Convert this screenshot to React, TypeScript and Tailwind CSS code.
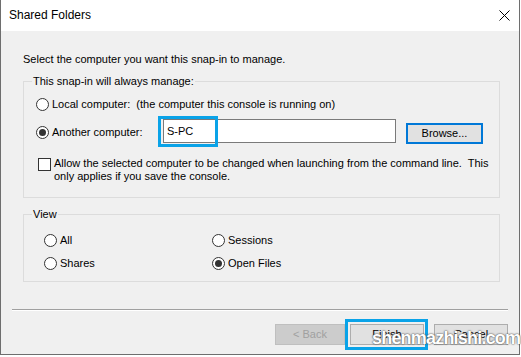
import React from 'react';

function Radio({ checked = false }: { checked?: boolean }) {
  return (
    <span className="flex h-[13px] w-[13px] shrink-0 items-center justify-center rounded-full border border-[#333] bg-white">
      {checked && <span className="h-[7px] w-[7px] rounded-full bg-[#333]" />}
    </span>
  );
}

function Option({ label, checked = false }: { label: string; checked?: boolean }) {
  return (
    <div className="flex h-[13px] items-center">
      <Radio checked={checked} />
      <span className="ml-[3px] whitespace-pre">{label}</span>
    </div>
  );
}

export default function App() {
  return (
    <div className="h-[357px] w-[521px] overflow-hidden bg-white font-['Liberation_Sans',Arial,sans-serif] text-[11px] leading-[13px] text-black">
      <div className="relative flex h-[355px] w-[520px] flex-col border-x border-b border-[#6e6e6e]">
        <div className="flex h-[31px] shrink-0 items-center justify-between bg-white pl-[8px] pr-[9px]">
          <span className="text-[12px]">Shared Folders</span>
          <svg width="11" height="11" viewBox="0 0 11 11" className="text-black">
            <path d="M0.5 0.5 L10.5 10.5 M10.5 0.5 L0.5 10.5" stroke="currentColor" strokeWidth="1" />
          </svg>
        </div>

        <div className="flex flex-1 flex-col bg-[#f0f0f0]">
          <p className="ml-[22px] mt-[22px]">Select the computer you want this snap-in to manage.</p>

          <fieldset className="ml-[22px] mt-[9px] w-[477px] border border-[#dcdcdc]">
            <legend className="ml-[8px] px-[1px]">This snap-in will always manage:</legend>
            <div className="flex flex-col pb-[14px] pl-[12px] pt-[10px]">
              <Option label="Local computer:  (the computer this console is running on)" />

              <div className="mt-[8px] flex h-[24px] items-start">
                <div className="mt-[7px] w-[127px]">
                  <Option label="Another computer:" checked />
                </div>
                <div className="relative flex h-[24px] w-[233px] items-center border border-[#7a7a7a] bg-white pl-[3px]">
                  S-PC
                  <span className="absolute -left-[6px] -top-[4px] h-[31px] w-[60px] border-[3px] border-[#0aa3e8]" />
                </div>
                <button className="ml-[10px] mt-[4px] h-[21px] w-[77px] border-2 border-[#0078d7] bg-[#e1e1e1]">
                  Browse...
                </button>
              </div>

              <div className="ml-[2px] mt-[15px] flex items-start">
                <span className="h-[13px] w-[13px] shrink-0 border border-[#333] bg-white" />
                <span className="-mt-[1px] ml-[3px] whitespace-pre">
                  {'Allow the selected computer to be changed when launching from the command line.  This'}
                  <br />
                  {'only applies if you save the console.'}
                </span>
              </div>
            </div>
          </fieldset>

          <fieldset className="ml-[22px] mt-[10px] w-[477px] border border-[#dcdcdc]">
            <legend className="ml-[8px] px-[1px]">View</legend>
            <div className="grid grid-cols-[168px_1fr] gap-y-[10px] pb-[11px] pl-[20px] pt-[13px]">
              <Option label="All" />
              <Option label="Sessions" />
              <Option label="Shares" />
              <Option label="Open Files" checked />
            </div>
          </fieldset>

          <div className="ml-[11px] mt-[27px] w-[496px] border-b border-t border-b-white border-t-[#a0a0a0]" />

          <div className="mt-[13px] flex justify-end pr-[11px]">
            <button disabled className="h-[21px] w-[70px] border border-[#bfbfbf] bg-[#cccccc] text-[#a0a0a0]">
              &lt; Back
            </button>
            <div className="relative ml-[5px]">
              <button className="h-[21px] w-[74px] border border-[#adadad] bg-[#e1e1e1]">Finish</button>
              <span className="absolute -left-[5px] -top-[5px] h-[31px] w-[83px] border-[3px] border-[#0aa3e8]" />
            </div>
            <button className="ml-[10px] h-[21px] w-[74px] border border-[#adadad] bg-[#e1e1e1]">Cancel</button>
          </div>
        </div>

        {/* watermark over the buttons */}
        <span className="absolute left-[371px] top-[327px] text-[18px] font-bold leading-[22px] tracking-[-0.8px] text-white [text-shadow:0_0_2px_#444,0_0_1px_#666]">
          shenmazhishi.com
        </span>
      </div>
    </div>
  );
}
